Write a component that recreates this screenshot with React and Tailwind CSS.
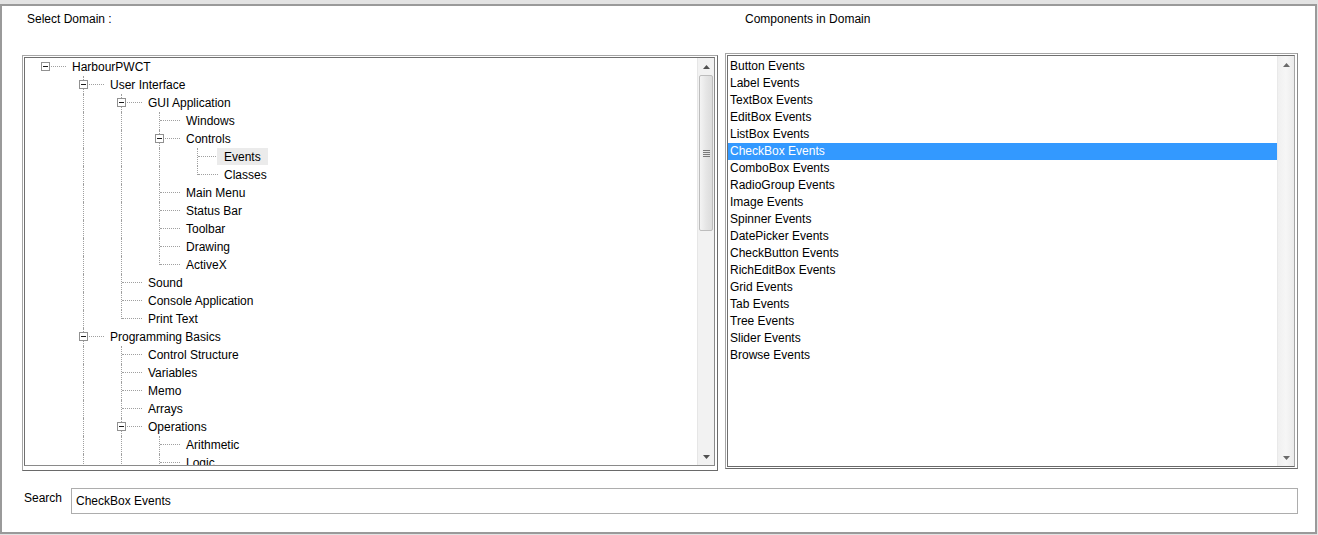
import React from "react";

const TREE = [
  {
    t: "HarbourPWCT",
    c: [
      {
        t: "User Interface",
        c: [
          {
            t: "GUI Application",
            c: [
              { t: "Windows" },
              { t: "Controls", c: [{ t: "Events", sel: true }, { t: "Classes" }] },
              { t: "Main Menu" },
              { t: "Status Bar" },
              { t: "Toolbar" },
              { t: "Drawing" },
              { t: "ActiveX" },
            ],
          },
          { t: "Sound" },
          { t: "Console Application" },
          { t: "Print Text" },
        ],
      },
      {
        t: "Programming Basics",
        c: [
          { t: "Control Structure" },
          { t: "Variables" },
          { t: "Memo" },
          { t: "Arrays" },
          { t: "Operations", c: [{ t: "Arithmetic" }, { t: "Logic" }, { t: "Comparison" }] },
          { t: "Procedures" },
        ],
      },
      { t: "Database" },
    ],
  },
];

function flatten(nodes, level, anc, out) {
  nodes.forEach((n, i) => {
    const hasNext = i < nodes.length - 1;
    out.push({ t: n.t, sel: n.sel, level, hasChildren: !!n.c, hasNext, anc });
    if (n.c) flatten(n.c, level + 1, anc.concat(hasNext), out);
  });
  return out;
}

const ROWS = flatten(TREE, 0, [], []);

const LIST = [
  "Button Events",
  "Label Events",
  "TextBox Events",
  "EditBox Events",
  "ListBox Events",
  "CheckBox Events",
  "ComboBox Events",
  "RadioGroup Events",
  "Image Events",
  "Spinner Events",
  "DatePicker Events",
  "CheckButton Events",
  "RichEditBox Events",
  "Grid Events",
  "Tab Events",
  "Tree Events",
  "Slider Events",
  "Browse Events",
];

function TreeRow({ r }) {
  const cx = 20 + 38 * r.level;
  const tx = 47 + 38 * r.level;
  const anc = [];
  for (let k = 1; k < r.level; k++) {
    if (r.anc[k]) {
      anc.push(
        <span
          key={k}
          className="absolute top-0 h-[18px] border-l border-dotted border-[#a0a0a0]"
          style={{ left: 20 + 38 * k }}
        />
      );
    }
  }
  return (
    <div className="relative h-[18px]">
      {anc}
      {r.level > 0 && (
        <span
          className="absolute top-0 border-l border-dotted border-[#a0a0a0]"
          style={{ left: cx, height: r.hasNext ? 18 : 9 }}
        />
      )}
      <span
        className="absolute top-[8px] border-t border-dotted border-[#a0a0a0]"
        style={{ left: cx + 1, width: 20 }}
      />
      {r.hasChildren && (
        <span
          className="absolute top-[4px] w-[9px] h-[9px] border border-[#919191] bg-white"
          style={{ left: cx - 4 }}
        >
          <span className="absolute left-[1px] top-[3px] w-[5px] h-[1px] bg-[#1a1a1a]" />
        </span>
      )}
      {r.sel && (
        <span
          className="absolute top-0 h-[17px] w-[51px] bg-[#ebebeb]"
          style={{ left: tx - 7 }}
        />
      )}
      <span
        className="absolute top-0 leading-[18px] whitespace-nowrap text-black"
        style={{ left: tx }}
      >
        {r.t}
      </span>
    </div>
  );
}

function UpArrow({ color = "#505050" }) {
  return (
    <svg width="7" height="4" viewBox="0 0 7 4">
      <path d="M3.5 0 L7 4 L0 4 Z" fill={color} />
    </svg>
  );
}

function DownArrow({ color = "#505050" }) {
  return (
    <svg width="7" height="4" viewBox="0 0 7 4">
      <path d="M0 0 L7 0 L3.5 4 Z" fill={color} />
    </svg>
  );
}

function TreeScrollbar() {
  return (
    <div className="w-[17px] h-full flex flex-col bg-[#f2f2f2] border-l border-[#e6e6e6]">
      <div className="h-[17px] flex items-center justify-center">
        <UpArrow />
      </div>
      <div className="h-[156px] mx-[1px] rounded-[2px] border border-[#bdbdbd] bg-gradient-to-r from-[#f4f4f4] via-[#e6e6e6] to-[#dcdcdc] flex flex-col items-center justify-center gap-[1px]">
        <span className="w-[7px] h-[1px] bg-[#7a7a7a]" />
        <span className="w-[7px] h-[1px] bg-[#7a7a7a]" />
        <span className="w-[7px] h-[1px] bg-[#7a7a7a]" />
        <span className="w-[7px] h-[1px] bg-[#7a7a7a]" />
      </div>
      <div className="flex-1" />
      <div className="h-[17px] flex items-center justify-center">
        <DownArrow />
      </div>
    </div>
  );
}

function ListScrollbar() {
  return (
    <div className="w-[17px] h-full flex flex-col bg-gradient-to-r from-[#f0f0f0] via-[#f6f6f6] to-[#ebebeb] border-l border-[#e9e9e9]">
      <div className="h-[17px] flex items-center justify-center">
        <UpArrow color="#6a6a6a" />
      </div>
      <div className="flex-1" />
      <div className="h-[17px] flex items-center justify-center">
        <DownArrow color="#6a6a6a" />
      </div>
    </div>
  );
}

export default function App() {
  return (
    <div
      className="w-[1318px] h-[535px] overflow-hidden bg-[#e3e3e3] pt-[4px] text-[12px] text-black"
      style={{ fontFamily: '"Liberation Sans", Arial, sans-serif' }}
    >
      <div className="w-[1317px] h-[530px] bg-white border-2 border-[#9a9a9a] flex flex-col">
        {/* header labels */}
        <div className="h-[47px] flex pl-[25px] pt-[6px]">
          <div className="w-[718px] leading-[14px]">Select Domain :</div>
          <div className="leading-[14px]">Components in Domain</div>
        </div>

        {/* panels */}
        <div className="flex items-start pl-[20px] h-[418px]">
          {/* tree panel */}
          <div className="mt-[2px] w-[696px] h-[416px] border border-t-[#a6a6a6] border-l-[#a6a6a6] border-r-[#6a6a6a] border-b-[#6a6a6a] pt-[1px] pl-[1px] pr-[2px] pb-[4px] bg-white">
            <div className="w-full h-full border border-t-[#6f6f6f] border-l-[#6f6f6f] border-r-[#8a8a8a] border-b-[#8a8a8a] flex bg-white">
              <div className="flex-1 h-full overflow-hidden">
                {ROWS.map((r, i) => (
                  <TreeRow key={i} r={r} />
                ))}
              </div>
              <TreeScrollbar />
            </div>
          </div>

          {/* list panel */}
          <div className="ml-[7px] w-[573px] h-[416px] border border-t-[#a6a6a6] border-l-[#a6a6a6] border-r-[#8a8a8a] border-b-[#6a6a6a] pt-[1px] pl-[1px] pr-[2px] pb-[1px] bg-white">
            <div className="w-full h-full border border-t-[#6f6f6f] border-l-[#6f6f6f] border-r-[#a6a6a6] border-b-[#6a6a6a] flex bg-white">
              <div className="flex-1 h-full overflow-hidden pt-[2px]">
                {LIST.map((item) => (
                  <div
                    key={item}
                    className={
                      item === "CheckBox Events"
                        ? "h-[17px] leading-[17px] pl-[2px] bg-[#3399ff] text-white whitespace-nowrap"
                        : "h-[17px] leading-[17px] pl-[2px] text-black whitespace-nowrap"
                    }
                  >
                    {item}
                  </div>
                ))}
              </div>
              <ListScrollbar />
            </div>
          </div>
        </div>

        {/* search */}
        <div className="flex items-start pl-[22px] mt-[17px]">
          <div className="w-[47px] mt-[3px] leading-[14px]">Search</div>
          <div className="w-[1227px] h-[26px] border border-[#adadad] bg-white pl-[4px] flex items-center leading-[14px]">
            CheckBox Events
          </div>
        </div>
      </div>
    </div>
  );
}
